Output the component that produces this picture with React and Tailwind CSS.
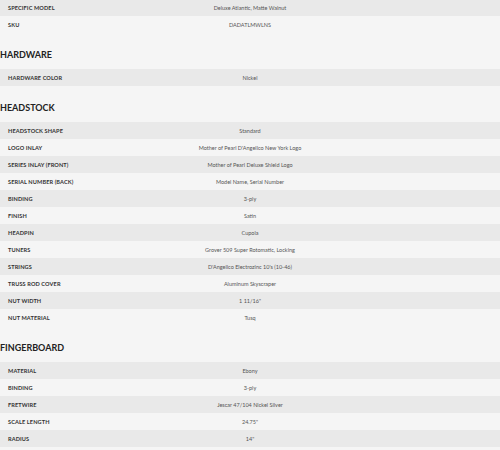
import React from 'react';

const sections = [
  {
    title: null,
    rows: [
      ['Specific Model', 'Deluxe Atlantic, Matte Walnut'],
      ['SKU', 'DADATLMWLNS'],
    ],
  },
  {
    title: 'Hardware',
    rows: [['Hardware Color', 'Nickel']],
  },
  {
    title: 'Headstock',
    rows: [
      ['Headstock Shape', 'Standard'],
      ['Logo Inlay', "Mother of Pearl D'Angelico New York Logo"],
      ['Series Inlay (Front)', 'Mother of Pearl Deluxe Shield Logo'],
      ['Serial Number (Back)', 'Model Name, Serial Number'],
      ['Binding', '3-ply'],
      ['Finish', 'Satin'],
      ['Headpin', 'Cupola'],
      ['Tuners', 'Grover 509 Super Rotomatic, Locking'],
      ['Strings', "D'Angelico Electrozinc 10's (10-46)"],
      ['Truss Rod Cover', 'Aluminum Skyscraper'],
      ['Nut Width', '1 11/16"'],
      ['Nut Material', 'Tusq'],
    ],
  },
  {
    title: 'Fingerboard',
    rows: [
      ['Material', 'Ebony'],
      ['Binding', '3-ply'],
      ['Fretwire', 'Jescar 47/104 Nickel Silver'],
      ['Scale Length', '24.75"'],
      ['Radius', '14"'],
    ],
  },
];

function SpecRow({ label, value, dark }) {
  return (
    <div
      className={`grid grid-cols-3 items-center h-[17px] ${
        dark ? 'bg-[#e9e9e9]' : 'bg-[#f5f5f5]'
      }`}
    >
      <div className="pl-[8px] text-[5.6px] leading-[6px] font-bold uppercase tracking-[0.02em] text-[#333]">
        {label}
      </div>
      <div className="text-center text-[5.5px] leading-[6px] text-[#555]">{value}</div>
      <div />
    </div>
  );
}

export default function App() {
  return (
    <div
      className="min-h-screen bg-[#f5f5f5] overflow-hidden"
      style={{ fontFamily: 'Lato, "Open Sans", sans-serif' }}
    >
      <div className="-mt-[1px]">
        {sections.map((section, i) => (
          <div key={i}>
            {section.title && (
              <div className="h-[36px] pt-[16px]">
                <h2 className="text-[9px] leading-[11px] font-bold uppercase text-[#222]">
                  {section.title}
                </h2>
              </div>
            )}
            {section.rows.map(([label, value], j) => (
              <SpecRow key={j} label={label} value={value} dark={j % 2 === 0} />
            ))}
          </div>
        ))}
      </div>
    </div>
  );
}
